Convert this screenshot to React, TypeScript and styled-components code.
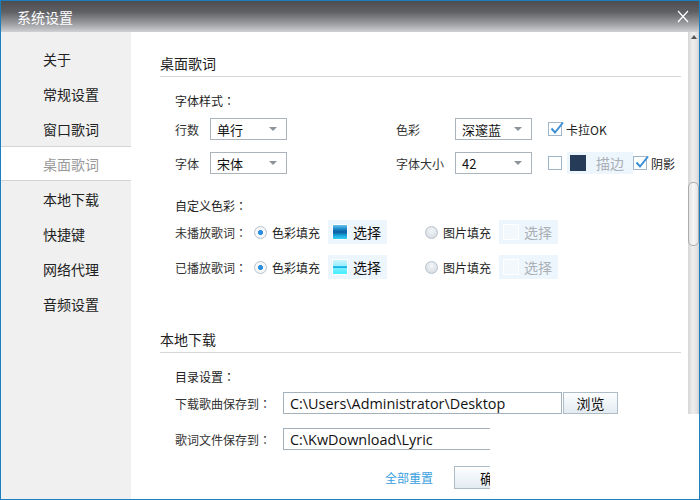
import styled, { createGlobalStyle } from "styled-components";

const GlobalStyle = createGlobalStyle`
  html, body {
    margin: 0;
    padding: 0;
    background: #fff;
  }
  body {
    font-family: "Noto Sans CJK SC", "Noto Sans", sans-serif;
    color: #333;
  }
`;

const Window = styled.div`
  position: relative;
  width: 700px;
  height: 500px;
  box-sizing: border-box;
  border: 1px solid #1b7fbf;
  display: flex;
  flex-direction: column;
  overflow: hidden;
`;

const TitleBar = styled.div`
  height: 31px;
  flex: none;
  display: flex;
  align-items: center;
  justify-content: space-between;
  padding: 0 10px 0 16px;
  background: linear-gradient(#4e4e51 0%, #5f6064 35%, #9fa0a4 75%, #d0d1d4 100%);
  color: #fff;
  font-size: 14px;
`;

const Body = styled.div`
  flex: 1;
  display: flex;
  min-height: 0;
`;

const Sidebar = styled.ul`
  width: 130px;
  flex: none;
  margin: 0;
  padding: 9px 0 0;
  list-style: none;
  background: #f0f0f0;
`;

const NavItem = styled.li<{ $active?: boolean }>`
  height: 35px;
  box-sizing: border-box;
  display: flex;
  align-items: center;
  padding-left: 42px;
  font-size: 14px;
  color: ${(p) => (p.$active ? "#9a9a9a" : "#222")};
  background: ${(p) => (p.$active ? "#fff" : "transparent")};
  border-top: 1px solid ${(p) => (p.$active ? "#d4d4d4" : "transparent")};
  border-bottom: 1px solid ${(p) => (p.$active ? "#d4d4d4" : "transparent")};
`;

const Content = styled.div`
  flex: 1;
  padding: 0 7px 0 29px;
  overflow: hidden;
`;

const SectionTitle = styled.div<{ $top: number }>`
  margin-top: ${(p) => p.$top}px;
  font-size: 14px;
  line-height: 20px;
  padding-bottom: 3px;
  border-bottom: 1px solid #d6d6d6;
  color: #222;
`;

const SectionBody = styled.div`
  padding-left: 15px;
`;

const SubTitle = styled.div<{ $top?: number }>`
  margin-top: ${(p) => p.$top ?? 16}px;
  font-size: 12px;
  line-height: 16px;
  color: #222;
`;

/* the SC face puts the full-width colon at the left of its cell; the TC one centres it */
const Colon = styled.span`
  font-family: "Noto Sans CJK TC", "Noto Sans CJK SC", sans-serif;
`;

const Row = styled.div<{ $top: number; $h?: number }>`
  display: flex;
  align-items: center;
  height: ${(p) => p.$h ?? 22}px;
  margin-top: ${(p) => p.$top}px;
  font-size: 12px;
  white-space: nowrap;
`;

const Label = styled.span<{ $w: number; $ml?: number }>`
  width: ${(p) => p.$w}px;
  margin-left: ${(p) => p.$ml ?? 0}px;
  flex: none;
  font-size: 12px;
  color: #333;
`;

const Select = styled.div<{ $w: number }>`
  width: ${(p) => p.$w}px;
  height: 22px;
  box-sizing: border-box;
  flex: none;
  display: flex;
  align-items: center;
  justify-content: space-between;
  padding: 0 9px 0 6px;
  border: 1px solid #abb4bd;
  background: #fff;
  font-size: 13px;
  color: #111;

  &::after {
    content: "";
    border-left: 4px solid transparent;
    border-right: 4px solid transparent;
    border-top: 4px solid #8d939a;
  }
`;

const CheckBox = styled.span<{ $ml?: number }>`
  position: relative;
  width: 14px;
  height: 14px;
  box-sizing: border-box;
  flex: none;
  margin-left: ${(p) => p.$ml ?? 0}px;
  border: 1px solid #9fb5ca;
  background: #fff;

  svg {
    position: absolute;
    left: 0;
    top: -3px;
  }
`;

const CheckText = styled.span`
  margin-left: 4px;
  font-size: 12px;
  color: #222;
`;

const StrokeBox = styled.div`
  width: 66px;
  height: 22px;
  box-sizing: border-box;
  flex: none;
  margin-left: 5px;
  display: flex;
  align-items: center;
  padding-left: 3px;
  background: #edf5fd;
  font-size: 14px;
  color: #a3a8ae;
`;

const Swatch = styled.span<{ $fill: string; $border?: string }>`
  width: 16px;
  height: 16px;
  box-sizing: border-box;
  flex: none;
  border: 1px solid ${(p) => p.$border ?? "#fff"};
  background: ${(p) => p.$fill};
`;

const SwatchText = styled.span<{ $ml: number; $muted?: boolean }>`
  margin-left: ${(p) => p.$ml}px;
  font-size: 14px;
  color: ${(p) => (p.$muted ? "#aab0b6" : "#111")};
`;

const Radio = styled.span<{ $on?: boolean; $ml?: number }>`
  width: 13px;
  height: 13px;
  box-sizing: border-box;
  flex: none;
  margin-left: ${(p) => p.$ml ?? 0}px;
  border-radius: 50%;
  border: 1px solid #b8c2cb;
  background: ${(p) =>
    p.$on
      ? "radial-gradient(circle, #2a8ee2 0 2.2px, #f4f6f8 2.8px)"
      : "radial-gradient(circle at 50% 35%, #f4f6f8, #cfd7de)"};
`;

const RadioText = styled.span`
  margin-left: 5px;
  width: 48px;
  flex: none;
  font-size: 12px;
  color: #222;
`;

const FillBox = styled.div<{ $ml: number }>`
  width: 59px;
  height: 24px;
  box-sizing: border-box;
  flex: none;
  margin-left: ${(p) => p.$ml}px;
  display: flex;
  align-items: center;
  padding-left: 4px;
  background: #eef6fd;
`;

const PathInput = styled.div`
  width: 279px;
  height: 22px;
  box-sizing: border-box;
  flex: none;
  display: flex;
  align-items: center;
  padding-left: 6px;
  border: 1px solid #a3b1bd;
  background: #fff;
  font-family: "Open Sans", "Noto Sans", sans-serif;
  font-size: 14.4px;
  color: #111;
`;

const Button = styled.div<{ $w: number; $ml?: number }>`
  width: ${(p) => p.$w}px;
  height: ${(p) => (p.$w > 60 ? 23 : 22)}px;
  box-sizing: border-box;
  flex: none;
  margin-left: ${(p) => p.$ml ?? 0}px;
  display: flex;
  align-items: center;
  justify-content: center;
  border: 1px solid #aebcc7;
  background: linear-gradient(#fdfeff, #e3ebf1);
  font-size: 14px;
  color: #111;
`;

const LinkText = styled.span<{ $ml: number }>`
  margin-left: ${(p) => p.$ml}px;
  font-size: 12px;
  color: #3aa0de;
`;

const ScrollTrack = styled.div`
  position: relative;
  width: 11px;
  flex: none;
  background: linear-gradient(to right, #d6d6d6, #eeeeee 45%, #e2e2e2 80%, #cfcfcf);
`;

const ScrollArrow = styled.span`
  position: absolute;
  left: 3px;
  top: 3px;
  border-left: 3px solid transparent;
  border-right: 3px solid transparent;
  border-bottom: 4px solid #555;
`;

const ScrollThumb = styled.span`
  position: absolute;
  left: 0;
  width: 11px;
  top: 150px;
  height: 64px;
  box-sizing: border-box;
  border: 1px solid #acacac;
  border-radius: 5px;
  background: linear-gradient(to right, #e4e4e6, #f6f6f7 50%, #e2e2e4);
`;

const BlankPatch = styled.div`
  position: absolute;
  left: 489px;
  top: 413px;
  right: -1px;
  bottom: -1px;
  background: #fff;
`;

const Check = () => (
  <svg width="16" height="16" viewBox="0 0 16 16">
    <path d="M2.5 8.5 L6 12.5 L14 2.5" fill="none" stroke="#3b8fd4" strokeWidth="2" />
  </svg>
);

const Close = () => (
  <svg width="12" height="13" viewBox="0 0 12 13">
    <path d="M1 1 L11 12 M11 1 L1 12" stroke="#fff" strokeWidth="1.2" fill="none" />
  </svg>
);

const navItems = ["关于", "常规设置", "窗口歌词", "桌面歌词", "本地下载", "快捷键", "网络代理", "音频设置"];

const unplayedFill =
  "linear-gradient(#6cc4f0 0%, #1a86c8 30%, #0a5d9e 50%, #1aa6dc 75%, #36d2f6 100%)";
const playedFill =
  "linear-gradient(#c8f6ff 0%, #9eeeff 40%, #12b4e6 48%, #12b4e6 54%, #7ceeff 60%, #3ff0ff 100%)";

export default function App() {
  return (
    <>
      <GlobalStyle />
      <Window>
        <TitleBar>
          <span>系统设置</span>
          <Close />
        </TitleBar>
        <Body>
          <Sidebar>
            {navItems.map((item) => (
              <NavItem key={item} $active={item === "桌面歌词"}>
                {item}
              </NavItem>
            ))}
          </Sidebar>
          <Content>
            <SectionTitle $top={21}>桌面歌词</SectionTitle>
            <SectionBody>
              <SubTitle>
                字体样式<Colon>：</Colon>
              </SubTitle>
              <Row $top={9}>
                <Label $w={35}>行数</Label>
                <Select $w={77}>单行</Select>
                <Label $w={59} $ml={109}>色彩</Label>
                <Select $w={77}>深邃蓝</Select>
                <CheckBox $ml={16}>
                  <Check />
                </CheckBox>
                <CheckText>卡拉OK</CheckText>
              </Row>
              <Row $top={12}>
                <Label $w={35}>字体</Label>
                <Select $w={77}>宋体</Select>
                <Label $w={59} $ml={109}>字体大小</Label>
                <Select $w={77}>42</Select>
                <CheckBox $ml={16} />
                <StrokeBox>
                  <Swatch $fill="#263b57" $border="#263b57" />
                  <SwatchText $ml={10} $muted>描边</SwatchText>
                </StrokeBox>
                <CheckBox>
                  <Check />
                </CheckBox>
                <CheckText>阴影</CheckText>
              </Row>

              <SubTitle $top={24}>
                自定义色彩<Colon>：</Colon>
              </SubTitle>
              <Row $top={6} $h={24}>
                <Label $w={79}>
                  未播放歌词<Colon>：</Colon>
                </Label>
                <Radio $on />
                <RadioText>色彩填充</RadioText>
                <FillBox $ml={8}>
                  <Swatch $fill={unplayedFill} />
                  <SwatchText $ml={5}>选择</SwatchText>
                </FillBox>
                <Radio $ml={38} />
                <RadioText>图片填充</RadioText>
                <FillBox $ml={8}>
                  <Swatch $fill="#f3f8fd" />
                  <SwatchText $ml={5} $muted>选择</SwatchText>
                </FillBox>
              </Row>
              <Row $top={11} $h={24}>
                <Label $w={79}>
                  已播放歌词<Colon>：</Colon>
                </Label>
                <Radio $on />
                <RadioText>色彩填充</RadioText>
                <FillBox $ml={8}>
                  <Swatch $fill={playedFill} />
                  <SwatchText $ml={5}>选择</SwatchText>
                </FillBox>
                <Radio $ml={38} />
                <RadioText>图片填充</RadioText>
                <FillBox $ml={8}>
                  <Swatch $fill="#f3f8fd" />
                  <SwatchText $ml={5} $muted>选择</SwatchText>
                </FillBox>
              </Row>
            </SectionBody>

            <SectionTitle $top={50}>本地下载</SectionTitle>
            <SectionBody>
              <SubTitle>
                目录设置<Colon>：</Colon>
              </SubTitle>
              <Row $top={7}>
                <Label $w={108}>
                  下载歌曲保存到<Colon>：</Colon>
                </Label>
                <PathInput>C:\Users\Administrator\Desktop</PathInput>
                <Button $w={55} $ml={1}>浏览</Button>
              </Row>
              <Row $top={14}>
                <Label $w={108}>
                  歌词文件保存到<Colon>：</Colon>
                </Label>
                <PathInput>C:\KwDownload\Lyric</PathInput>
              </Row>
              <Row $top={16} $h={23}>
                <LinkText $ml={210}>全部重置</LinkText>
                <Button $w={80} $ml={21}>确定</Button>
                <Button $w={80} $ml={10}>取消</Button>
              </Row>
            </SectionBody>
          </Content>
          <ScrollTrack>
            <ScrollArrow />
            <ScrollThumb />
          </ScrollTrack>
        </Body>
        <BlankPatch />
      </Window>
    </>
  );
}
